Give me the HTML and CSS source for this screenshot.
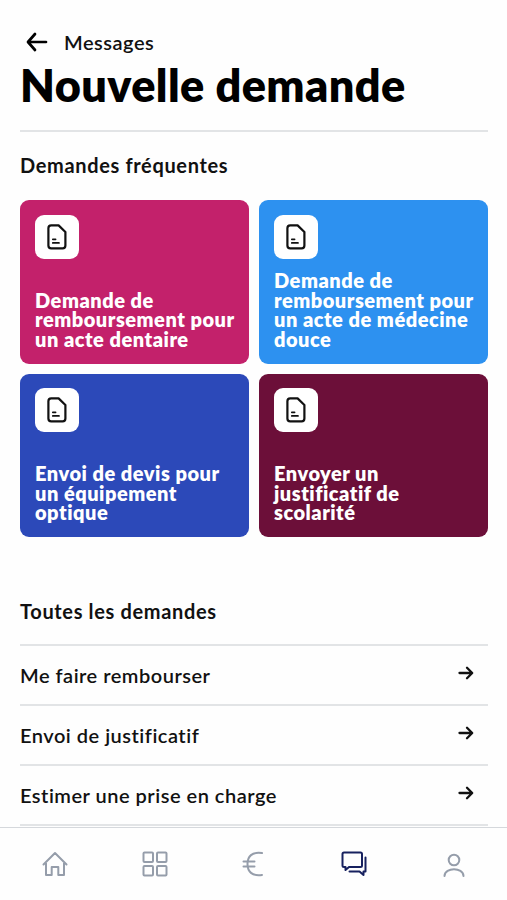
FILE: index.html
```html
<!DOCTYPE html>
<html lang="fr">
<head>
    <meta charset="UTF-8">
    <meta name="viewport" content="width=device-width, initial-scale=1.0">
    <title>Nouvelle demande</title>
    <link rel="stylesheet" href="styles.css">
</head>
<body>
    <!-- Shared icons -->
    <svg class="symbols">
        <symbol id="doc" viewBox="0 0 20 26">
            <path d="M4.2 1.4H11.6L18.4 8V21.6Q18.4 24.4 15.6 24.4H4.2Q1.4 24.4 1.4 21.6V4.2Q1.4 1.4 4.2 1.4Z" stroke-width="2.2"/>
            <path d="M5.8 15.3H8.6M5.8 18.9H12" stroke-width="1.7"/>
        </symbol>
        <symbol id="arrow" viewBox="0 0 16 14">
            <path d="M1.5 7H14M9 1.7L14.2 7L9 12.3"/>
        </symbol>
    </svg>

    <main class="content">
        <a class="back">
            <svg class="back-icon" viewBox="0 0 22 20"><path d="M20 10H2.5M9 2L2 10L9 18"/></svg>
            <span>Messages</span>
        </a>
        <h1>Nouvelle demande</h1>

        <section class="frequent">
            <h2>Demandes fréquentes</h2>
            <div class="cards">
                <div class="card pink">
                    <div class="card-icon"><svg><use href="#doc"/></svg></div>
                    <p>Demande de<br>remboursement pour<br>un acte dentaire</p>
                </div>
                <div class="card sky">
                    <div class="card-icon"><svg><use href="#doc"/></svg></div>
                    <p>Demande de<br>remboursement pour<br>un acte de médecine<br>douce</p>
                </div>
                <div class="card blue">
                    <div class="card-icon"><svg><use href="#doc"/></svg></div>
                    <p>Envoi de devis pour<br>un équipement<br>optique</p>
                </div>
                <div class="card plum">
                    <div class="card-icon"><svg><use href="#doc"/></svg></div>
                    <p>Envoyer un<br>justificatif de<br>scolarité</p>
                </div>
            </div>
        </section>

        <section class="all">
            <h2>Toutes les demandes</h2>
            <ul class="list">
                <li><span>Me faire rembourser</span><svg><use href="#arrow"/></svg></li>
                <li><span>Envoi de justificatif</span><svg><use href="#arrow"/></svg></li>
                <li><span>Estimer une prise en charge</span><svg><use href="#arrow"/></svg></li>
            </ul>
        </section>
    </main>

    <nav class="tabbar">
        <a><svg viewBox="0 0 26 26"><path d="M1.5 13.5L13 2L24.5 13.5M4 12V24H9.7V16H16.3V24H22V12"/></svg></a>
        <a><svg viewBox="0 0 26 26"><rect x="1.5" y="1.5" width="9.5" height="9.5" rx="1"/><rect x="15" y="1.5" width="9.5" height="9.5" rx="1"/><rect x="1.5" y="15" width="9.5" height="9.5" rx="1"/><rect x="15" y="15" width="9.5" height="9.5" rx="1"/></svg></a>
        <a><svg viewBox="0 0 26 26"><path d="M21 2C11 .5 6.5 5.5 6.500 13S11 25.500 21 24M2.500 10.500H13.500M2.500 15.500H13.500"/></svg></a>
        <a class="active"><svg viewBox="0 0 26 26"><path d="M3 1.500H19.500Q21 1.500 21 3V14.500Q21 16 19.500 16H8L4.500 19V16H3Q1.500 16 1.500 14.500V3Q1.500 1.500 3 1.500ZM24.500 6.500V20.500H22.500V24L18.500 20.500H8.500"/></svg></a>
        <a><svg viewBox="0 0 26 26"><circle cx="13" cy="9" r="5.300"/><path d="M3.500 25C4 16 22 16 22.500 25"/></svg></a>
    </nav>
</body>
</html>
```

FILE: styles.css
```css
* {
    box-sizing: border-box;
}
body {
    margin: 0;
    height: 900px;
    overflow: hidden;
    display: flex;
    flex-direction: column;
    font-family: Lato, "Open Sans", sans-serif;
    font-size: 20px;
    letter-spacing: 0.5px;
    background-color: #fefefe;
    color: #111;
}
svg {
    fill: none;
    stroke: currentColor;
    stroke-linecap: round;
    stroke-linejoin: round;
}
.symbols {
    display: none;
}
.content {
    height: 827px;
    padding: 30px 19px 0 20px;
    overflow: hidden;
}
.back {
    display: flex;
    align-items: center;
    height: 24px;
    padding-left: 6px;
    gap: 16px;
    font-weight: 600;
}
.back-icon {
    width: 22px;
    height: 20px;
    stroke-width: 2.7;
    color: #000;
}
h1 {
    margin: 0;
    height: 78px;
    padding-top: 5px;
    border-bottom: 2px solid #e2e4e6;
    font-size: 45px;
    line-height: 52px;
    font-weight: 800;
    letter-spacing: 0.4px;
    white-space: nowrap;
    color: #000;
}
h2 {
    margin: 0;
    font-size: 20px;
    line-height: 24px;
    font-weight: 700;
    letter-spacing: 0.65px;
}
.frequent h2 {
    padding-top: 21px;
    height: 68px;
}
.cards {
    display: grid;
    grid-template-columns: 229px 229px;
    grid-auto-rows: 163.5px;
    gap: 10px;
}
.card {
    display: flex;
    flex-direction: column;
    justify-content: space-between;
    padding: 14.5px 0 14px 15px;
    border-radius: 9px;
    color: #fff;
}
.pink {
    background-color: #c3216b;
}
.sky {
    background-color: #2d91f0;
}
.blue {
    background-color: #2c49b9;
}
.plum {
    background-color: #6c0f39;
}
.card-icon {
    display: flex;
    align-items: center;
    justify-content: center;
    width: 44px;
    height: 44px;
    border-radius: 9px;
    background-color: #fff;
    color: #111;
}
.card-icon svg {
    width: 20px;
    height: 26px;
}
.card p {
    margin: 0;
    line-height: 19.6px;
    font-weight: 800;
    white-space: nowrap;
}
.all h2 {
    padding-top: 62px;
    height: 107px;
}
.list {
    margin: 0;
    padding: 0;
    list-style: none;
    border-bottom: 2px solid #e2e4e6;
}
.list li {
    display: flex;
    align-items: center;
    justify-content: space-between;
    height: 60px;
    padding-right: 14px;
    border-top: 2px solid #e2e4e6;
    font-weight: 600;
}
.list svg {
    width: 16px;
    height: 14px;
    margin-top: -5px;
    stroke-width: 2.3;
}
.tabbar {
    display: flex;
    height: 73px;
    padding: 0 3px 0 5px;
    border-top: 1px solid #d5d8dc;
}
.tabbar a {
    flex: 1;
    display: flex;
    justify-content: center;
    padding-top: 23px;
    color: #959daa;
}
.tabbar .active {
    color: #17215f;
}
.tabbar svg {
    width: 26px;
    height: 26px;
    stroke-width: 2;
}
```
